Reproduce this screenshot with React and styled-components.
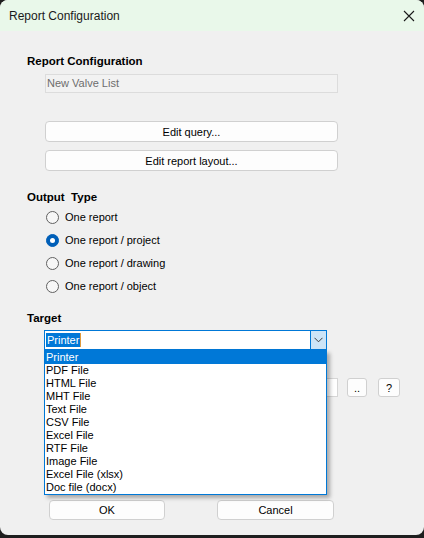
import React from 'react'
import styled, { createGlobalStyle } from 'styled-components'

const GlobalStyle = createGlobalStyle`
  html, body {
    margin: 0;
    padding: 0;
    background: #1e1e1e;
  }
  body {
    width: 424px;
    height: 538px;
    overflow: hidden;
    font-family: "Liberation Sans", Arial, sans-serif;
  }
`

const outputTypes = [
  'One report',
  'One report / project',
  'One report / drawing',
  'One report / object',
]

const targets = [
  'Printer',
  'PDF File',
  'HTML File',
  'MHT File',
  'Text File',
  'CSV File',
  'Excel File',
  'RTF File',
  'Image File',
  'Excel File (xlsx)',
  'Doc file (docx)',
]

const CloseIcon = () => (
  <svg width="12" height="12" viewBox="0 0 12 12">
    <path d="M1 1 L11 11 M11 1 L1 11" stroke="#1a1a1a" strokeWidth="1.1" fill="none" />
  </svg>
)

const Chevron = () => (
  <svg width="9" height="6" viewBox="0 0 9 6">
    <path d="M0.5 0.8 L4.5 4.8 L8.5 0.8" stroke="#3a3a3a" strokeWidth="1" fill="none" />
  </svg>
)

const App = () => {
  const selectedType = 1

  return (
    <>
      <GlobalStyle />
      <Window>
        <TitleBar>
          <span>Report Configuration</span>
          <CloseButton>
            <CloseIcon />
          </CloseButton>
        </TitleBar>
        <Body>
          <Heading>Report Configuration</Heading>
          <ReadOnlyField>New Valve List</ReadOnlyField>
          <WideButton $top={28}>Edit query...</WideButton>
          <WideButton $top={8}>Edit report layout...</WideButton>

          <Heading $top={19}>Output&nbsp; Type</Heading>
          <RadioList>
            {outputTypes.map((label, i) => (
              <RadioRow key={label}>
                <RadioDot $checked={i === selectedType} />
                {label}
              </RadioRow>
            ))}
          </RadioList>

          <Heading $top={18}>Target</Heading>
          <Combo>
            <ComboText>
              <Selection>Printer</Selection>
              <Caret />
            </ComboText>
            <ComboArrow>
              <Chevron />
            </ComboArrow>
            <DropList>
              {targets.map((t, i) => (
                <DropItem key={t} $active={i === 0}>
                  {t}
                </DropItem>
              ))}
            </DropList>
          </Combo>

          <FileRow>
            <FileField />
            <SmallButton $left={9} $w={20}>..</SmallButton>
            <SmallButton $left={11} $w={22}>?</SmallButton>
          </FileRow>

          <Footer>
            <DialogButton $left={22} $w={116}>OK</DialogButton>
            <DialogButton $left={52} $w={117}>Cancel</DialogButton>
          </Footer>
        </Body>
      </Window>
    </>
  )
}

const Window = styled.div`
  width: 424px;
  height: 535px;
  background: #f0f0f0;
  border-radius: 8px;
  overflow: hidden;
  display: flex;
  flex-direction: column;
`

const TitleBar = styled.div`
  flex: 0 0 31px;
  height: 31px;
  box-sizing: border-box;
  padding: 0 9px 0 9px;
  background: #e9f8ea;
  display: flex;
  align-items: center;
  justify-content: space-between;
  font-size: 12px;
  color: #1a1a1a;
`

const CloseButton = styled.div`
  width: 12px;
  height: 12px;
  display: flex;
  margin-right: 0;
`

const Body = styled.div`
  flex: 1;
  display: flex;
  flex-direction: column;
  align-items: flex-start;
  padding: 23px 0 0 27px;
  font-size: 11px;
  color: #000;
`

const Heading = styled.div`
  margin-top: ${p => p.$top || 0}px;
  font-size: 11.5px;
  font-weight: bold;
  line-height: 14px;
  height: 14px;
`

const ReadOnlyField = styled.div`
  margin: 6px 0 0 18px;
  width: 293px;
  height: 19px;
  box-sizing: border-box;
  border: 1px solid #dcdcdc;
  background: #f2f2f2;
  color: #6d6d6d;
  padding-left: 1px;
  line-height: 17px;
`

const WideButton = styled.div`
  margin: ${p => p.$top}px 0 0 18px;
  width: 293px;
  height: 21px;
  box-sizing: border-box;
  border: 1px solid #d0d0d0;
  border-radius: 4px;
  background: #fdfdfd;
  display: flex;
  align-items: center;
  justify-content: center;
`

const RadioList = styled.div`
  margin: 6px 0 0 19px;
  display: flex;
  flex-direction: column;
  gap: 9px;
`

const RadioRow = styled.div`
  height: 14px;
  display: flex;
  align-items: center;
  gap: 6px;
  line-height: 14px;
`

const RadioDot = styled.span`
  width: 13px;
  height: 13px;
  box-sizing: border-box;
  border-radius: 50%;
  border: 1px solid ${p => (p.$checked ? '#005fb8' : '#616161')};
  background: ${p => (p.$checked ? '#005fb8' : '#f7f7f7')};
  display: flex;
  align-items: center;
  justify-content: center;

  &::after {
    content: '';
    display: ${p => (p.$checked ? 'block' : 'none')};
    width: 5px;
    height: 5px;
    border-radius: 50%;
    background: #fff;
  }
`

const Combo = styled.div`
  position: relative;
  margin: 5px 0 0 17px;
  width: 283px;
  height: 20px;
  box-sizing: border-box;
  border: 1px solid #0078d7;
  background: #fff;
  display: flex;
`

const ComboText = styled.div`
  flex: 1;
  display: flex;
  align-items: center;
  padding-left: 1px;
`

const Selection = styled.span`
  background: #0078d7;
  color: #fff;
  height: 14px;
  line-height: 14px;
  padding: 0 1px;
`

const Caret = styled.span`
  width: 1px;
  height: 14px;
  background: #e09a3c;
`

const ComboArrow = styled.div`
  width: 15px;
  border-left: 1px solid #0078d7;
  background: #cce4f7;
  display: flex;
  align-items: center;
  justify-content: center;
`

const DropList = styled.div`
  position: absolute;
  z-index: 2;
  top: 19px;
  left: -1px;
  width: 283px;
  box-sizing: border-box;
  border: 1px solid #0078d7;
  background: #fff;
  box-shadow: 3px 3px 4px rgba(0, 0, 0, 0.3);
`

const DropItem = styled.div`
  height: 13px;
  line-height: 13px;
  padding-left: 1px;
  font-size: 11px;
  background: ${p => (p.$active ? '#0078d7' : 'transparent')};
  color: ${p => (p.$active ? '#fff' : '#000')};
  white-space: nowrap;
`

const FileRow = styled.div`
  margin: 28px 0 0 17px;
  display: flex;
`

const FileField = styled.div`
  width: 294px;
  height: 19px;
  box-sizing: border-box;
  border: 1px solid #d6d6d6;
  background: #fff;
`

const SmallButton = styled.div`
  margin-left: ${p => p.$left}px;
  width: ${p => p.$w}px;
  height: 19px;
  box-sizing: border-box;
  border: 1px solid #d0d0d0;
  border-radius: 3px;
  background: #fdfdfd;
  display: flex;
  align-items: center;
  justify-content: center;
  font-size: 11px;
`

const Footer = styled.div`
  margin-top: 103px;
  display: flex;
`

const DialogButton = styled.div`
  margin-left: ${p => p.$left}px;
  width: ${p => p.$w}px;
  height: 20px;
  box-sizing: border-box;
  border: 1px solid #d0d0d0;
  border-radius: 4px;
  background: #fdfdfd;
  display: flex;
  align-items: center;
  justify-content: center;
`

export default App
